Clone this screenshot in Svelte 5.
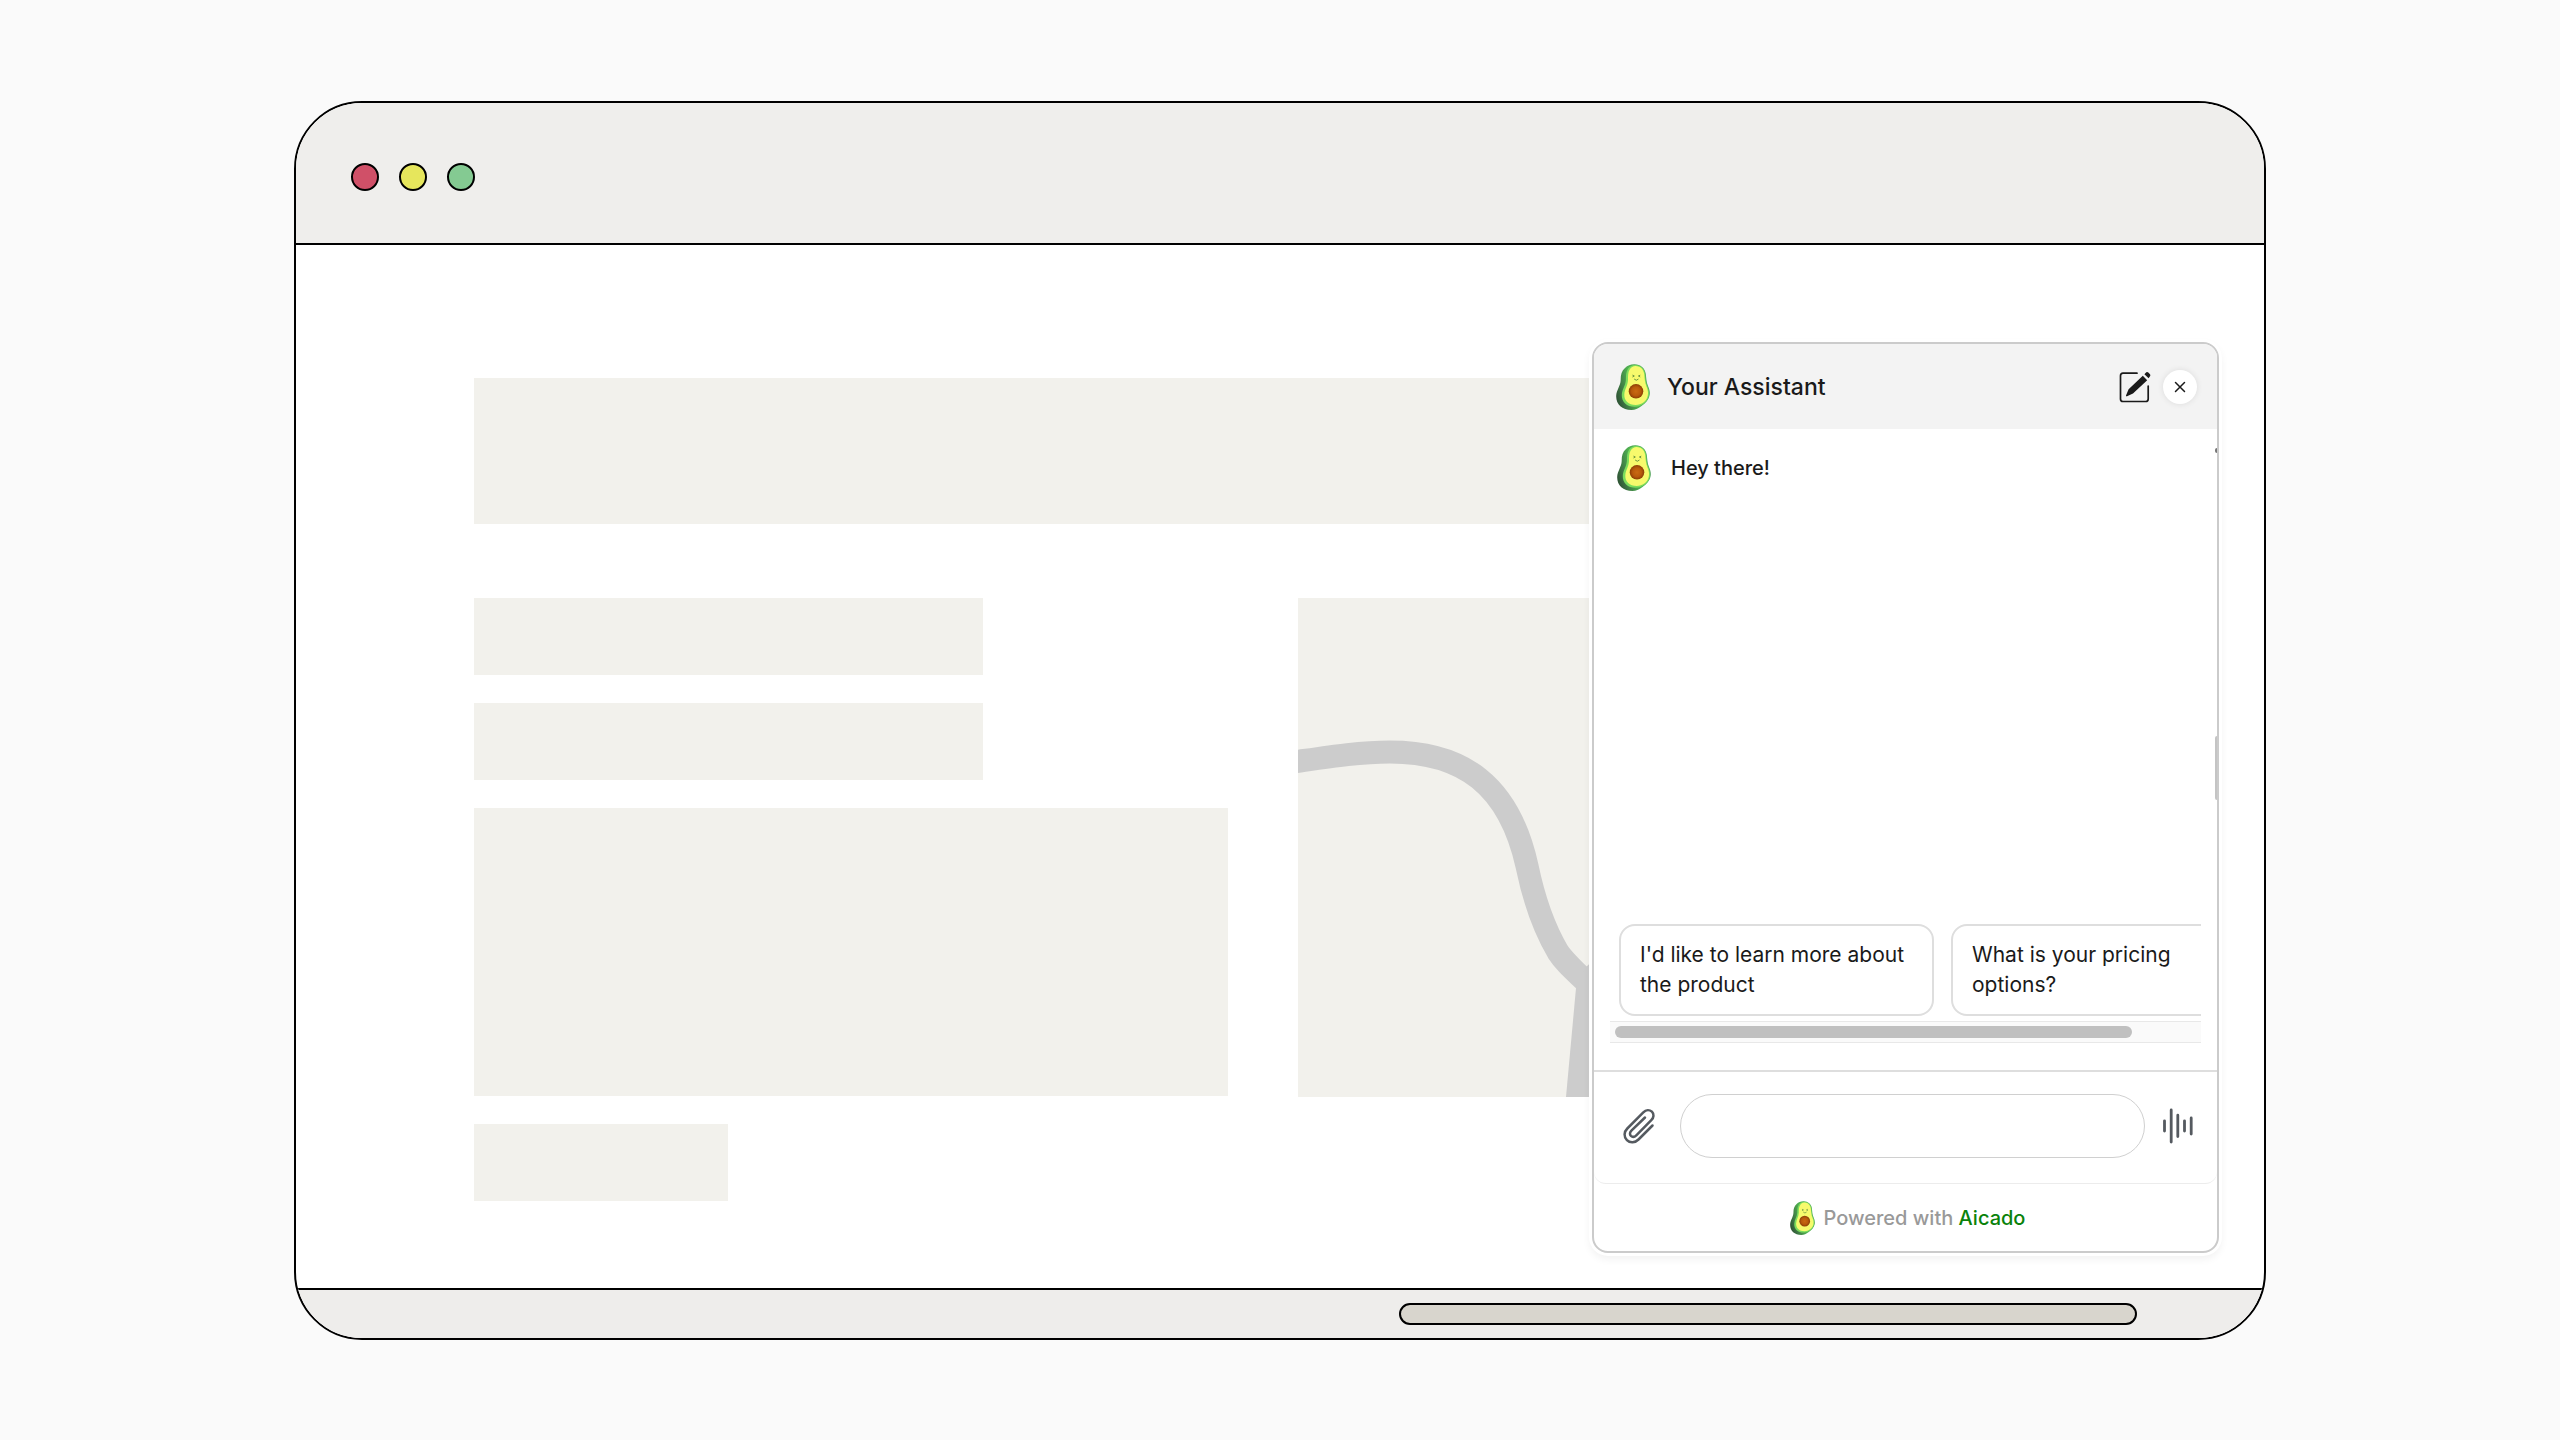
<!--
  Browser mockup with the Aicado chat widget opened over a placeholder page.
-->
<script>
  let title = $state('Your Assistant');
  let draft = $state('');
  let messages = $state(['Hey there!']);

  const LIGHTS = ['#d05068', '#e6e65c', '#84ca92'];
  const SUGGESTIONS = ["I'd like to learn more about the product", 'What is your pricing options?'];
</script>

{#snippet avocado(size)}
  <svg class="avocado {size}" viewBox="0 0 34 46" aria-hidden="true">
    <defs>
      <linearGradient id="skin-{size}" x1="0" y1="0.7" x2="1" y2="0.3">
        <stop offset="0" stop-color="#2f5535" />
        <stop offset="0.2" stop-color="#3f7a45" />
        <stop offset="0.5" stop-color="#4fb050" />
        <stop offset="1" stop-color="#4e9a58" />
      </linearGradient>
      <radialGradient id="pit-{size}">
        <stop offset="0" stop-color="#c96a12" />
        <stop offset="0.6" stop-color="#b85a0c" />
        <stop offset="1" stop-color="#8a3d05" />
      </radialGradient>
    </defs>
    <path fill="url(#skin-{size})" d="M18 0.3C24 0 29 4 29.800 10C30.300 14 30.300 18 32 22C33.300 25 34.200 28 33.600 31C32.800 36 29 39.500 25.500 42C22 44.800 19 46 15.500 46C6 46 0 40 0.200 32C0.400 26 4.500 22 4.700 16C4.600 11 5.500 7 9 4C11.500 1.500 14.500 0.500 18 0.300Z" />
    <path fill="#7bdc5c" d="M19 0.900C25 0.800 28.600 5 29.200 10C29.600 15 29.600 18 31.300 22C33 26 33.600 29 32.800 32C31.500 38 26 42.500 19 42.800C11 43 5.500 38 5.800 31C6 25 9.600 22 9.900 16C10 12 9.800 8 12.200 4.500C13.800 2.200 16.200 1 19 0.900Z" />
    <path fill="#f7fa6c" d="M19.500 2C25 2 27.700 6 28.300 10.500C28.700 15 28.900 18.500 30.500 22.500C32 26 32.500 29 31.700 32C30.400 37.500 25.500 41 19.700 41C12.500 41 8 36.500 8.300 30.500C8.600 25 11.700 22 12 16C12.100 12 11.800 8.500 13.700 5.500C15 3.200 17 2 19.500 2Z" />
    <circle cx="20" cy="27.300" r="7.300" fill="url(#pit-{size})" />
    <g fill="none" stroke="#5c8a3a" stroke-width="0.900" stroke-linecap="round">
      <path d="M16.800 11.300l1.500 0.700-1.500 0.800" />
      <path d="M23.900 11.300l-1.500 0.700 1.500 0.800" />
      <path d="M18.400 15.300q1.900 2.200 3.800 0" />
    </g>
  </svg>
{/snippet}

<div class="page">
  <div class="window">
    <header class="bar">
      {#each LIGHTS as color}
        <span class="light" style="background: {color}"></span>
      {/each}
    </header>

    <div class="viewport">
      <main class="content">
        <div class="block hero"></div>
        <div class="columns">
          <div class="stack">
            <div class="block line"></div>
            <div class="block line"></div>
            <div class="block text"></div>
            <div class="block action"></div>
          </div>
          <svg class="map" viewBox="0 0 788 499" preserveAspectRatio="xMinYMid slice" aria-hidden="true">
            <path fill="none" stroke="#ccc" stroke-width="23" d="M-4 164C30 159 60 154 92 154C165 154 211 187 229 268C236 302 247 332 260 354C267 365 276 372 310 405" />
            <path fill="#ccc" d="M278 390L268 499H340V320L287 370Z" />
          </svg>
        </div>
      </main>

      <section class="widget" aria-label={title}>
        <header class="widget-head">
          {@render avocado('large')}
          <h1>{title}</h1>
          <button class="edit" aria-label="New conversation">
            <svg viewBox="0 0 32 32">
              <path fill="none" stroke="#1a1a1a" stroke-width="1.700" stroke-linecap="round" d="M18 2.200H4Q1.500 2.200 1.500 4.700V28Q1.500 30.500 4 30.500H26.700Q29.200 30.500 29.200 28V15" />
              <path fill="#1a1a1a" d="M23.800 4.800L28.200 9.300L14 22.600L8 25.200Q6.800 25.600 7 24.400L9.600 18.300ZM25.400 3.200L27.300 1.300Q28.300 0.500 29.300 1.500L31 3.200Q31.800 4.300 31 5.300L29.600 7.300Z" />
            </svg>
          </button>
          <button class="close" aria-label="Close">
            <svg viewBox="0 0 12 12"><path fill="none" stroke="#1a1a1a" stroke-width="1.500" stroke-linecap="round" d="M1.500 1.500l9 9M10.500 1.500l-9 9" /></svg>
          </button>
        </header>

        <div class="messages">
          {#each messages as text}
            <div class="message">{@render avocado('large')}<p>{text}</p></div>
          {/each}
          <span class="edge arrow"></span>
          <span class="edge grip"></span>
        </div>

        <div class="suggestions">
          <div class="chips">
            {#each SUGGESTIONS as s}
              <button class="chip" onclick={() => (draft = s)}>{s}</button>
            {/each}
          </div>
          <div class="track"><div class="thumb"></div></div>
        </div>

        <form class="composer" onsubmit={(e) => e.preventDefault()}>
          <button type="button" class="tool" aria-label="Attach file">
            <svg class="clip" viewBox="0 0 32 36" fill="none" stroke="#555a60" stroke-width="2.500" stroke-linecap="round">
              <path d="M29.500 17.500L15.500 31.500C12 35 7 35.200 3.900 32.100C0.700 28.900 0.800 24 4.300 20.500L20.300 4.300C23 1.600 26.500 1.500 28.900 3.700C31.200 6 31 9.500 28.300 12.200L13.300 27.300C11.500 29.100 9.300 29.200 7.900 27.900C6.500 26.500 6.700 24.400 8.400 22.700L22 9.500" />
            </svg>
          </button>
          <input bind:value={draft} aria-label="Message" />
          <button class="tool" aria-label="Voice">
            <svg class="wave" viewBox="0 0 32 36" stroke="#555a60" stroke-width="2.800" stroke-linecap="round">
              <path d="M2.500 12.800V23M9.200 2V34M15.800 7.200V28.500M22.500 12.800V23M29.200 10V26" />
            </svg>
          </button>
        </form>

        <footer class="credit">
          {@render avocado('small')}
          <p>Powered with <a href="#aicado">Aicado</a></p>
        </footer>
      </section>
    </div>

    <footer class="statusbar"><div class="slider"></div></footer>
  </div>
</div>

<style>
  :global(body) { background: #fafafa; }
  .page { padding: 101px 294px 100px; font-family: Inter, sans-serif; color: #1a1a1a; }
  .page * { box-sizing: border-box; }
  .window { border: 2px solid #000; border-radius: 68px; overflow: hidden; background: #fff; }
  .bar { display: flex; align-items: flex-start; gap: 20px; padding: 60px 55px 52px; background: #efeeec; border-bottom: 2px solid #000; }
  .light { width: 28px; height: 28px; border: 2px solid #000; border-radius: 50%; }

  .viewport { position: relative; }
  .content { padding: 133px 178px 87px; }
  .block { background: #f2f1ec; }
  .hero { height: 146px; margin-bottom: 74px; }
  .columns { display: grid; grid-template-columns: 754fr 788fr; column-gap: 70px; align-items: start; }
  .stack { display: flex; flex-direction: column; gap: 28px; }
  .line { width: 509px; height: 77px; }
  .text { height: 288px; }
  .action { width: 254px; height: 77px; }
  .map { display: block; width: 100%; height: 499px; background: #f2f1ec; }

  .widget { position: absolute; right: 45px; bottom: 35px; width: 627px; display: flex; flex-direction: column; background: #fff; border: 2px solid #cbcbcb; border-radius: 16px; box-shadow: 0 0 0 3px #fff, 0 4px 8px 2px rgba(0, 0, 0, 0.06); }
  .widget-head { display: flex; align-items: center; padding: 0 20px 0 22px; height: 85px; background: #f3f3f3; border-radius: 14px 14px 0 0; }
  h1 { flex: 1; margin: 0 0 0 17px; font-size: 23px; line-height: 28px; font-weight: 500; }
  button { border: none; background: none; padding: 0; font-family: inherit; color: inherit; cursor: pointer; }
  .avocado { display: block; flex: none; }
  .large { width: 34px; height: 46px; }
  .small { width: 25px; height: 34px; }
  .edit, .edit svg { display: block; width: 32px; height: 32px; }
  .close { display: flex; align-items: center; justify-content: center; width: 34px; height: 34px; margin-left: 12px; border-radius: 50%; background: #fff; box-shadow: 0 0 6px rgba(0, 0, 0, 0.1); }
  .close svg { width: 12px; height: 12px; }

  .messages { position: relative; height: 495px; padding: 16px 23px; }
  .message { display: flex; align-items: center; gap: 20px; }
  p { margin: 0; font-size: 20px; line-height: 28px; font-weight: 500; }
  .edge { position: absolute; right: 0; width: 2px; border-radius: 2px 0 0 2px; }
  .arrow { top: 19px; height: 5px; background: #777; }
  .grip { top: 307px; height: 64px; background: #c4c4c4; }

  .suggestions { padding: 0 16px 27px; border-bottom: 2px solid #dedede; }
  .chips { display: flex; gap: 17px; padding-left: 9px; overflow: hidden; }
  .chip { flex: none; width: 315px; padding: 14px 19px; text-align: left; font-size: 21px; line-height: 30px; background: #fff; border: 2px solid #dedede; border-radius: 16px; }
  .track { margin-top: 5px; padding: 4px 5px; background: #fafafa; border: solid #e8e8e8; border-width: 1px 0; }
  .thumb { width: 89%; height: 12px; border-radius: 6px; background: #c0c0c0; }

  .composer { display: flex; align-items: center; padding: 22px 23px 25px 29px; border-bottom: 1px solid #ececec; border-radius: 0 0 12px 12px; }
  .tool svg { display: block; width: 32px; height: 36px; }
  input { flex: 1; min-width: 0; height: 64px; margin: 0 17px 0 25px; padding: 0 28px; font: 20px Inter, sans-serif; background: #fff; border: 1px solid #d0d0d0; border-radius: 32px; outline: none; }

  .credit { display: flex; align-items: center; justify-content: center; gap: 9px; height: 67px; padding-left: 4px; }
  .credit p { color: #999; }
  .credit a { color: #0a820a; text-decoration: none; }

  .statusbar { padding: 13px 127px 13px; border-top: 2px solid #000; background: #eeedeb; }
  .slider { width: 738px; height: 22px; margin-left: auto; border: 2px solid #000; border-radius: 11px; background: #d8d5cd; }
</style>
